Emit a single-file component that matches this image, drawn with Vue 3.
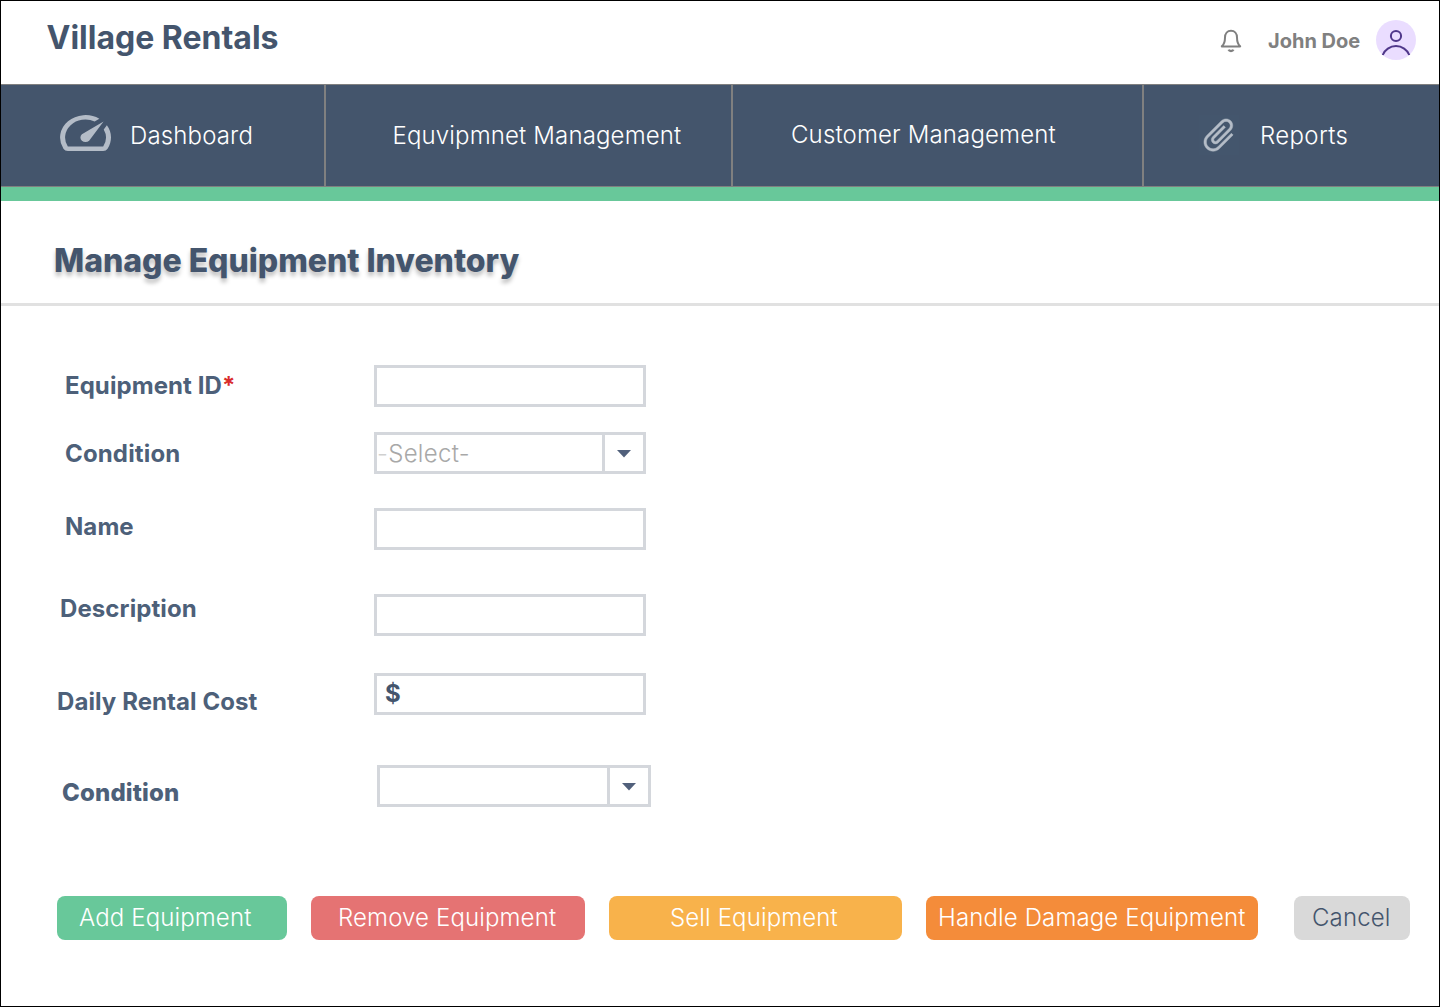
<script setup>
const fields = [
  { key: 'equipment-id', label: 'Equipment ID', required: true, type: 'text' },
  { key: 'condition', label: 'Condition', type: 'select', placeholder: true },
  { key: 'name', label: 'Name', type: 'text' },
  { key: 'description', label: 'Description', type: 'text' },
  { key: 'cost', label: 'Daily Rental Cost', type: 'text', prefix: '$' },
  { key: 'status', label: 'Condition', type: 'select' },
]

const actions = [
  { key: 'add', label: 'Add Equipment' },
  { key: 'remove', label: 'Remove Equipment' },
  { key: 'sell', label: 'Sell Equipment' },
  { key: 'damage', label: 'Handle Damage Equipment' },
  { key: 'cancel', label: 'Cancel' },
]
</script>

<template>
  <div class="page">
    <header class="header">
      <div class="brand">Village Rentals</div>
      <div class="user">
        <svg class="bell" viewBox="0 0 24 26" fill="none" stroke="#808080" stroke-width="2" stroke-linejoin="round">
          <path d="M2.8 18.4C4.9 16.7 6 13.8 6 9.6C6 5.4 8.4 2.7 12 2.7S18 5.4 18 9.6C18 13.8 19.1 16.7 21.2 18.4Z" />
          <path d="M9.6 21.6C10.4 23.5 13.6 23.5 14.4 21.6" stroke-width="2.4" />
        </svg>
        <span class="user-name">John Doe</span>
        <svg class="avatar" viewBox="0 0 40 40" fill="none">
          <circle cx="20" cy="20" r="20" fill="#eaddff" />
          <circle cx="20" cy="16" r="5.1" stroke="#4f378a" stroke-width="2" />
          <path d="M6.7 35C8.7 29.8 14 26.1 20 26.1S31.3 29.8 33.3 35" stroke="#4f378a" stroke-width="2" />
        </svg>
      </div>
    </header>

    <nav class="nav">
      <a class="tab dashboard">
        <svg class="gauge" viewBox="2 4 20 16" preserveAspectRatio="none">
          <path d="M20.38 8.57l-1.23 1.85a8 8 0 0 1-.22 7.58H5.07A8 8 0 0 1 15.58 6.85l1.85-1.23A10 10 0 0 0 3.35 19a2 2 0 0 0 1.72 1h13.85a2 2 0 0 0 1.74-1 10 10 0 0 0-.27-10.44zm-9.79 6.84a2 2 0 0 0 2.83 0l5.66-8.49-8.49 5.66a2 2 0 0 0 0 2.83z" />
        </svg>
        <span>Dashboard</span>
      </a>
      <a class="tab equipment"><span>Equvipmnet Management</span></a>
      <a class="tab customer"><span>Customer Management</span></a>
      <a class="tab reports">
        <svg class="clip" viewBox="0 0 24 24">
          <path transform="rotate(45 12 12)" d="M16.5 6v11.5c0 2.21-1.79 4-4 4s-4-1.79-4-4V5c0-1.38 1.12-2.5 2.5-2.5s2.5 1.12 2.5 2.5v10.5c0 .55-.45 1-1 1s-1-.45-1-1V6H10v9.5c0 1.38 1.12 2.5 2.5 2.5s2.5-1.12 2.5-2.5V5c0-2.21-1.79-4-4-4S7 2.79 7 5v12.5c0 3.04 2.46 5.5 5.5 5.5s5.5-2.46 5.5-5.5V6h-1.5z" />
        </svg>
        <span>Reports</span>
      </a>
    </nav>
    <div class="accent"></div>

    <div class="title-bar">
      <h1>Manage Equipment Inventory</h1>
    </div>

    <form class="form">
      <div v-for="field in fields" :key="field.key" class="field" :class="field.key">
        <label>{{ field.label }}<span v-if="field.required" class="required">*</span></label>
        <div v-if="field.type === 'text'" class="control">
          <span v-if="field.prefix" class="prefix">{{ field.prefix }}</span>
        </div>
        <div v-else class="control select">
          <div class="value">
            <template v-if="field.placeholder"><span class="dash">-</span>Select-</template>
          </div>
          <div class="toggle">
            <svg viewBox="0 0 14 8"><path d="M0 0H14L7 7.6Z" fill="#51607b" /></svg>
          </div>
        </div>
      </div>
    </form>

    <div class="actions">
      <button v-for="action in actions" :key="action.key" type="button" :class="action.key">{{ action.label }}</button>
    </div>
  </div>
</template>

<style scoped>
.page {
  box-sizing: border-box;
  width: 1440px;
  height: 1007px;
  border: 1px solid #000;
  background: #fff;
  color: #44556d;
  font-family: Inter, sans-serif;
  overflow: hidden;
}
.header {
  display: flex;
  justify-content: space-between;
  height: 83px;
  box-sizing: border-box;
  padding: 17px 23px 0 45.5px;
}
.brand {
  font-size: 32px;
  line-height: 40px;
  font-weight: 700;
  white-space: nowrap;
}
.user {
  display: flex;
  align-items: center;
  height: 40px;
  margin-top: 2px;
}
.bell {
  width: 24px;
  height: 26px;
  margin: 2px 25px 0 0;
}
.user-name {
  width: 92px;
  margin: 2px 16px 0 0;
  font-size: 20px;
  line-height: 24px;
  font-weight: 700;
  color: #808080;
  white-space: nowrap;
}
.avatar {
  width: 40px;
  height: 40px;
}
.nav {
  display: flex;
  box-sizing: border-box;
  height: 103px;
  border-top: 1px solid #808080;
  border-bottom: 1px solid #808080;
  background: #44556c;
  color: #fff;
  font-size: 24px;
  line-height: 30px;
  font-weight: 360;
  letter-spacing: 0.15px;
}
.tab {
  display: flex;
  align-items: center;
  box-sizing: border-box;
  border-right: 2px solid #808080;
  white-space: nowrap;
}
.tab.dashboard {
  width: 325px;
  padding-left: 59px;
}
.tab.equipment {
  width: 407px;
  padding-left: 66.5px;
}
.tab.customer {
  width: 411px;
  padding: 0 0 2px 58px;
}
.tab.reports {
  flex: 1;
  padding-left: 55px;
  border-right: 0;
}
.gauge {
  width: 51px;
  height: 36px;
  margin: 0 19px 6px 0;
  fill: #b4bcc7;
}
.clip {
  width: 40px;
  height: 40px;
  margin: 0 21px 2px 0;
  background: #44566d;
  fill: #b4bcc7;
  stroke: #b4bcc7;
  stroke-width: 0.25;
}
.tab.reports span {
  letter-spacing: 0.35px;
}
.accent {
  height: 14px;
  background: #68c89a;
}
.title-bar {
  box-sizing: border-box;
  height: 105px;
  padding: 40px 0 0 53px;
  border-bottom: 3px solid #e1e1e1;
}
h1 {
  margin: 0;
  font-size: 32px;
  line-height: 40px;
  font-weight: 800;
  letter-spacing: -0.03px;
  text-shadow: 0 4px 4px rgba(0, 0, 0, 0.25);
  white-space: nowrap;
}
.form {
  padding-top: 59px;
}
.field {
  display: flex;
  height: 42px;
}
label {
  box-sizing: border-box;
  width: 373px;
  padding-left: 64px;
  font-size: 24px;
  line-height: 42px;
  font-weight: 670;
  letter-spacing: 0.08px;
  color: #4d6079;
  white-space: nowrap;
}
.required {
  color: #d92c2c;
}
.control {
  display: flex;
  box-sizing: border-box;
  width: 272px;
  height: 42px;
  border: 3px solid #d4d7dc;
}
.field.condition {
  margin-top: 25px;
}
.field.condition label {
  line-height: 44px;
  letter-spacing: 0.15px;
}
.field.name {
  margin-top: 34px;
}
.field.name label {
  line-height: 37px;
}
.field.description {
  margin-top: 44px;
}
.field.description label {
  padding-left: 59px;
  line-height: 30px;
  letter-spacing: 0.1px;
}
.field.cost {
  margin-top: 37px;
}
.field.cost label {
  padding-left: 56px;
  line-height: 57px;
}
.field.status {
  margin-top: 50px;
}
.field.status label {
  width: 376px;
  padding-left: 61px;
  line-height: 56px;
  font-weight: 760;
  letter-spacing: 0.15px;
}
.field.status .control {
  width: 274px;
}
.value {
  flex: 1;
  font-size: 24px;
  line-height: 38px;
  font-weight: 270;
  letter-spacing: 0.3px;
  color: #a8a8a8;
  white-space: nowrap;
}
.dash {
  color: #d0d0d0;
}
.toggle {
  display: flex;
  align-items: center;
  justify-content: center;
  box-sizing: border-box;
  width: 41px;
  border-left: 3px solid #d4d7dc;
}
.toggle svg {
  width: 14px;
  height: 8px;
  margin-top: 2px;
}
.prefix {
  padding-left: 8px;
  font-size: 24px;
  line-height: 36px;
  font-weight: 700;
}
.actions {
  display: flex;
  margin: 89px 0 0 56px;
}
button {
  box-sizing: border-box;
  height: 44px;
  padding: 0;
  border: 0;
  border-radius: 8px;
  margin-right: 24px;
  font-family: inherit;
  font-size: 24px;
  line-height: 44px;
  font-weight: 350;
  letter-spacing: 0.13px;
  color: #fff;
  text-align: left;
  white-space: nowrap;
}
.add {
  width: 230px;
  padding-left: 22px;
  background: #68c89a;
}
.remove {
  width: 274px;
  padding-left: 27px;
  background: #e57373;
}
.sell {
  width: 293px;
  padding-left: 61px;
  background: #f8b24b;
}
.damage {
  width: 332px;
  padding-left: 12px;
  margin-right: 36px;
  background: #f48c3a;
}
.cancel {
  width: 116px;
  padding-left: 18px;
  margin-right: 0;
  background: #d9d9d9;
  color: #44556d;
}
</style>
